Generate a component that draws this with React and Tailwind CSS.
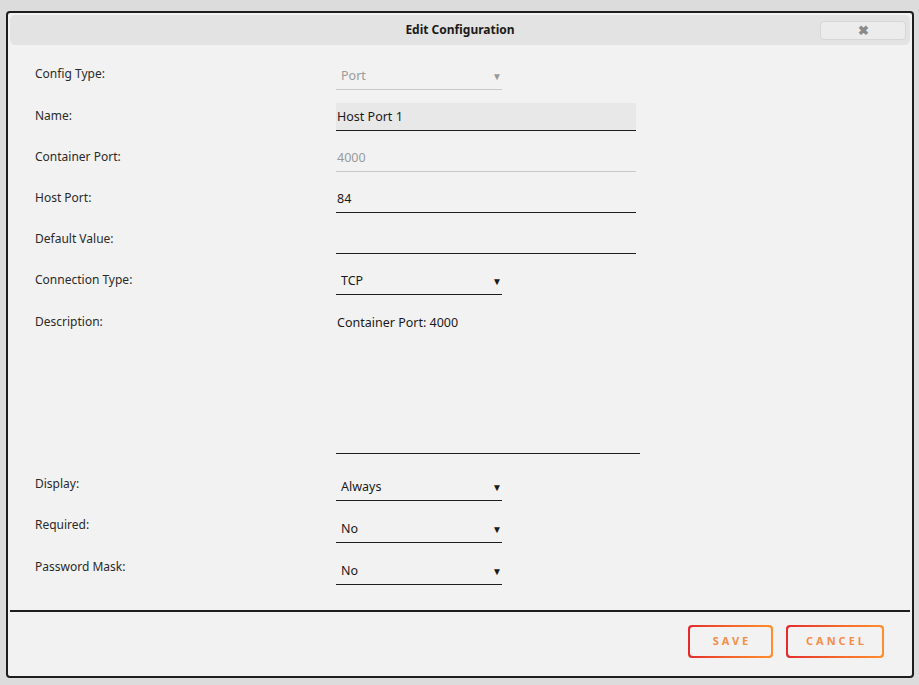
import React from "react";

const font = { fontFamily: '"Noto Sans", "Open Sans", Arial, sans-serif' };

function Label({ children, pt = "pt-[3px]" }) {
  return (
    <div className={`w-[301px] shrink-0 ${pt} text-[12px] leading-[20px] text-[#2a2a2a]`}>
      {children}
    </div>
  );
}

function TextField({ value, disabled, filled }) {
  return (
    <div
      className={`w-[300px] h-[28px] pt-[4px] pl-[1px] text-[12.5px] leading-[20px] border-b ${
        disabled ? "border-[#c8c8c8] text-[#9a9a9a]" : "border-[#1e1e1e] text-[#1a1a1a]"
      } ${filled ? "bg-[#e8e8e8]" : ""}`}
    >
      {value}
    </div>
  );
}

function Select({ value, disabled }) {
  return (
    <div
      className={`w-[166px] h-[28px] pt-[4px] pl-[5px] pr-0 flex justify-between text-[12.5px] leading-[20px] border-b ${
        disabled ? "border-[#c8c8c8] text-[#9a9a9a]" : "border-[#1e1e1e] text-[#1a1a1a]"
      }`}
    >
      <span>{value}</span>
      <span className={`text-[10px] leading-[20px] ${disabled ? "text-[#9a9a9a]" : "text-[#1a1a1a]"}`}>▼</span>
    </div>
  );
}

function Row({ label, children, mb = "mb-[13px]", pt }) {
  return (
    <div className={`flex ${mb}`}>
      <Label pt={pt}>{label}</Label>
      {children}
    </div>
  );
}

function GradButton({ children, w }) {
  return (
    <div className={`${w} h-[33px] p-[2px] rounded-[4px] bg-linear-to-r from-[#e4282c] to-[#ff8f2c]`}>
      <div className="w-full h-full rounded-[3px] bg-[#f2f2f2] flex items-center justify-center text-[11px] font-bold tracking-[3px] text-[#f68d48] pl-[3px]">
        {children}
      </div>
    </div>
  );
}

export default function App() {
  return (
    <div className="w-[919px] h-[685px] bg-[#dcdcdc] pt-[11px] pl-[6px]" style={font}>
      <div className="w-[908px] h-[667px] border-2 border-[#1e1e1e] rounded-[4px] bg-[#f2f2f2] pt-[2px] px-[2px] flex flex-col">
        <div className="relative h-[30px] bg-[#e3e3e3] rounded-[5px] flex items-center justify-center">
          <span className="text-[12px] font-bold text-[#1a1a1a]">Edit Configuration</span>
          <div className="absolute right-[4px] top-[6px] w-[86px] h-[19px] rounded-[4px] bg-[#ececec] border border-[#d6d6d6] flex items-center justify-center">
            <span className="text-[13px] font-bold leading-none text-[#8a8a8a]">✖</span>
          </div>
        </div>

        <div className="pl-[25px] mt-[17px]">
          <Row label="Config Type:" pt="pt-[2px]">
            <Select value="Port" disabled />
          </Row>
          <Row label="Name:">
            <TextField value="Host Port 1" filled />
          </Row>
          <Row label="Container Port:">
            <TextField value="4000" disabled />
          </Row>
          <Row label="Host Port:">
            <TextField value="84" />
          </Row>
          <Row label="Default Value:">
            <TextField value="" />
          </Row>
          <Row label="Connection Type:">
            <Select value="TCP" />
          </Row>
          <Row label="Description:" mb="mb-[19px]" pt="pt-[4px]">
            <div className="w-[304px] h-[146px] pt-[5px] pl-[1px] text-[12.5px] leading-[20px] text-[#1a1a1a] border-b border-[#1e1e1e]">
              Container Port: 4000
            </div>
          </Row>
          <Row label="Display:" mb="mb-[14px]" pt="pt-[1px]">
            <Select value="Always" />
          </Row>
          <Row label="Required:" mb="mb-[14px]" pt="pt-0">
            <Select value="No" />
          </Row>
          <Row label="Password Mask:" mb="mb-0" pt="pt-0">
            <Select value="No" />
          </Row>
        </div>

        <div className="mt-[25px] h-[2px] bg-[#1e1e1e]" />

        <div className="flex justify-end gap-[13px] pr-[26px] mt-[13px]">
          <GradButton w="w-[85px]">SAVE</GradButton>
          <GradButton w="w-[98px]">CANCEL</GradButton>
        </div>
      </div>
    </div>
  );
}
